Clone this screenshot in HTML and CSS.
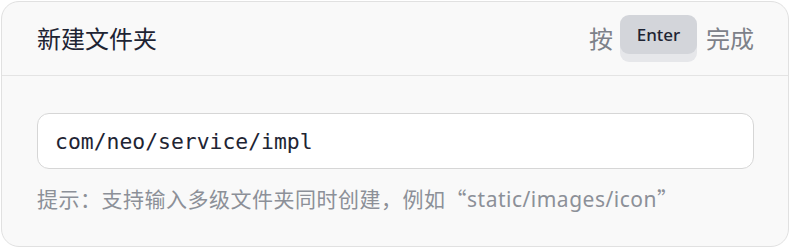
FILE: index.html
```html
<!DOCTYPE html>
<html lang="zh-CN">
<head>
<meta charset="utf-8">
<title>新建文件夹</title>
<link rel="stylesheet" href="styles.css">
</head>
<body>
  <div class="card">
    <div class="card-header">
      <div class="title">新建文件夹</div>
      <div class="shortcut">
        <span>按</span>
        <kbd class="key">Enter</kbd>
        <span>完成</span>
      </div>
    </div>
    <div class="card-body">
      <input class="path-input" type="text" value="com/neo/service/impl" readonly>
      <div class="hint">提示：支持输入多级文件夹同时创建，例如<span class="cjk-quote">“</span>static/images/icon<span class="cjk-quote">”</span></div>
    </div>
  </div>
</body>
</html>
```
FILE: styles.css
```css
* { box-sizing: border-box; }
html, body { margin: 0; background: #ffffff; }
body {
  padding: 1px;
  font-family: "Noto Sans", "Noto Sans CJK SC", sans-serif;
}
.card {
  width: 788px;
  height: 246px;
  background: #f9f9f9;
  border: 1px solid #e1e1e1;
  border-radius: 18px;
  overflow: hidden;
}
.card-header {
  height: 74px;
  border-bottom: 1px solid #e4e4e4;
  display: flex;
  align-items: center;
  justify-content: space-between;
  padding: 0 34px 0 35px;
}
.title {
  font-size: 24px;
  color: #1e2433;
  line-height: 1;
}
.shortcut {
  display: flex;
  align-items: center;
  font-size: 24px;
  color: #7d8189;
  line-height: 1;
}
.key {
  font-family: "Noto Sans", sans-serif;
  font-size: 17px;
  font-weight: 500;
  color: #1e2433;
  background: #d3d5da;
  border-radius: 9px;
  height: 39px;
  width: 77px;
  display: flex;
  align-items: center;
  justify-content: center;
  margin: 0 9px 8px 7px;
  box-shadow: 0 8px 0 #e6e7ea;
}
.card-body {
  padding: 37px 34px 0 35px;
}
.path-input {
  display: block;
  width: 100%;
  height: 56px;
  background: #ffffff;
  border: 1px solid #d6d6d6;
  border-radius: 12px;
  padding: 0 17px;
  font-family: "DejaVu Sans Mono", "Liberation Mono", monospace;
  font-size: 21.4px;
  color: #1e2433;
  outline: none;
}
.hint {
  margin-top: 14px;
  font-size: 21px;
  line-height: 30px;
  color: #8c9098;
  letter-spacing: 0.5px;
}
.cjk-quote {
  font-family: "Noto Sans CJK SC", sans-serif;
}
```
